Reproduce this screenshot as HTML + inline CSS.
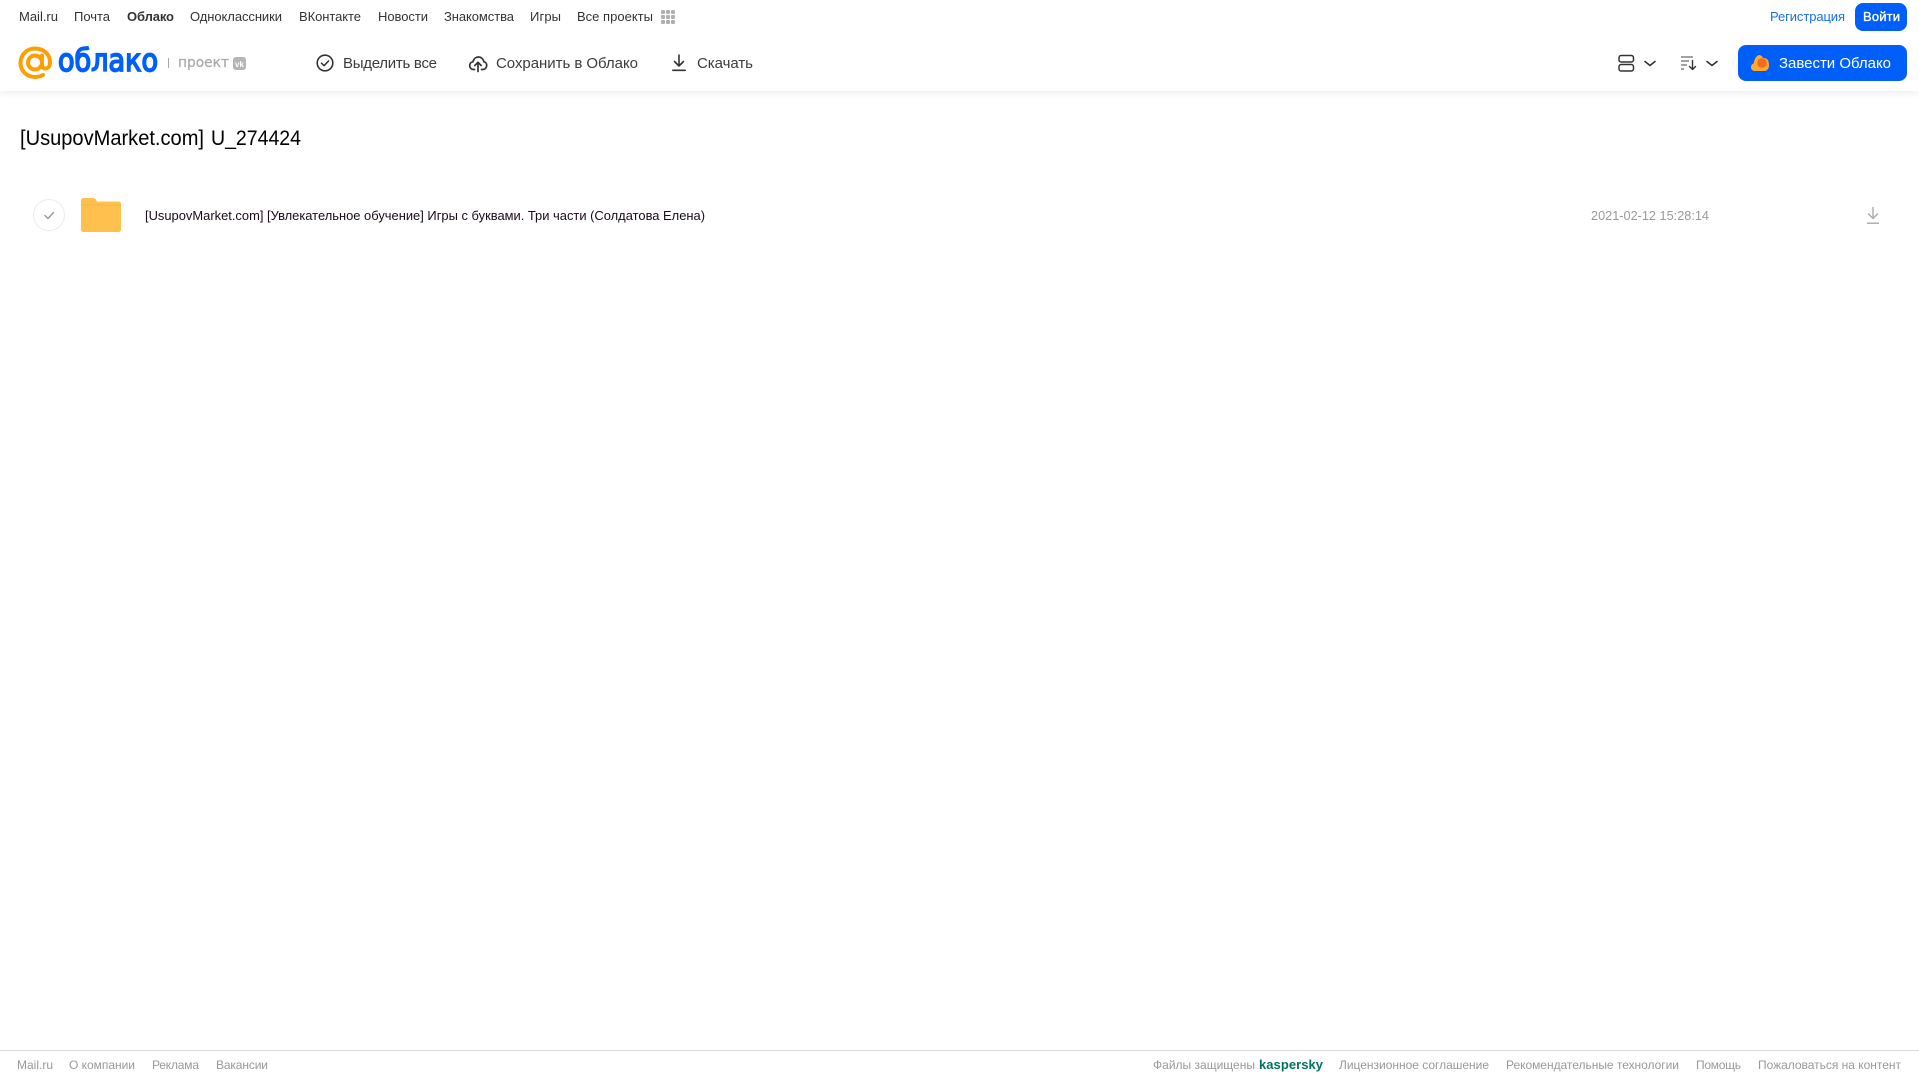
<!DOCTYPE html>
<html lang="ru">
<head>
<meta charset="utf-8">
<title>Облако</title>
<style>
html,body{margin:0;padding:0;background:#fff;width:1919px;height:1079px;overflow:hidden}
svg{display:block;position:absolute;left:0;top:0}
text{font-family:"Liberation Sans",sans-serif}
.n{font-size:13px;fill:#333}
.t{font-size:15px;fill:#3c3c3c}
.f{font-size:12px;fill:#999}
#hdr{position:absolute;left:0;top:0;width:1919px;height:91px;background:#fff;box-shadow:0 1px 8px rgba(0,0,0,.09)}
</style>
</head>
<body>
<div id="hdr"></div>
<svg width="1919" height="1079" viewBox="0 0 1919 1079" xmlns="http://www.w3.org/2000/svg">
  <!-- top nav -->
  <text class="n" x="19" y="21" textLength="39">Mail.ru</text>
  <text class="n" x="74" y="21" textLength="36">Почта</text>
  <text class="n" x="127" y="21" textLength="47" font-weight="700">Облако</text>
  <text class="n" x="190" y="21" textLength="92">Одноклассники</text>
  <text class="n" x="299" y="21" textLength="62">ВКонтакте</text>
  <text class="n" x="378" y="21" textLength="50">Новости</text>
  <text class="n" x="444" y="21" textLength="70">Знакомства</text>
  <text class="n" x="530" y="21" textLength="31">Игры</text>
  <text class="n" x="577" y="21" textLength="76">Все проекты</text>
  <g fill="#b0b0b0">
    <rect x="661" y="10" width="4" height="4" rx="1"/><rect x="666" y="10" width="4" height="4" rx="1"/><rect x="671" y="10" width="4" height="4" rx="1"/>
    <rect x="661" y="15" width="4" height="4" rx="1"/><rect x="666" y="15" width="4" height="4" rx="1"/><rect x="671" y="15" width="4" height="4" rx="1"/>
    <rect x="661" y="20" width="4" height="4" rx="1"/><rect x="666" y="20" width="4" height="4" rx="1"/><rect x="671" y="20" width="4" height="4" rx="1"/>
  </g>
  <text x="1770" y="21" font-size="13" fill="#1a6fe8" textLength="75">Регистрация</text>
  <rect x="1855" y="3" width="52" height="28" rx="8" fill="#005ff9"/>
  <text x="1863" y="21" font-size="13" fill="#fff" stroke="#fff" stroke-width=".35" textLength="37">Войти</text>

  <!-- logo -->
  <g fill="none" stroke="#ff9e00" stroke-width="4">
    <circle cx="35" cy="62.500" r="7"/>
    <path d="M42 55.500v9.500c0 5 8 5 8-2.500 0-8.500-6.500-14-15-14-8.300 0-14.500 6.500-14.500 14.500 0 8.500 7 14 14.500 14 3 0 5.500-.7 8-2" stroke-linecap="round"/>
  </g>
  <text x="58" y="71" font-size="31" fill="#005ff9" stroke="#005ff9" stroke-width="1.700" style="font-family:'DejaVu Sans',sans-serif" textLength="100" lengthAdjust="spacingAndGlyphs">облако</text>
  <rect x="168" y="58" width="1" height="10" fill="#aaa"/>
  <text x="178" y="67" font-size="14" fill="#aaa" stroke="#aaa" stroke-width=".25" style="font-family:'DejaVu Sans',sans-serif" textLength="51" lengthAdjust="spacingAndGlyphs">проект</text>
  <rect x="233" y="57" width="13" height="13" rx="3" fill="#b5b5b5"/>
  <text x="235" y="67" font-size="8" fill="#fff" font-weight="700" textLength="9">vk</text>

  <!-- toolbar -->
  <circle cx="325" cy="63" r="7.800" fill="none" stroke="#333" stroke-width="1.600"/>
  <path d="M321.500 63.200l2.600 2.500 4.500-4.800" fill="none" stroke="#333" stroke-width="1.500" stroke-linecap="round" stroke-linejoin="round"/>
  <text class="t" x="343" y="68" textLength="94">Выделить все</text>

  <path d="M474.500 69.500h-1c-2.300 0-3.800-1.900-3.800-3.900 0-2 1.300-3.500 3.200-3.800.8-3 3-4.800 5.500-4.800 2.800 0 5 2 5.400 4.700 1.700.3 2.900 1.900 2.900 3.700 0 2.200-1.600 4.100-3.800 4.100h-1.400" fill="none" stroke="#333" stroke-width="1.700" stroke-linecap="round"/>
  <path d="M478 71.500v-9M474.800 65.500l3.200-3.200 3.200 3.200" fill="none" stroke="#333" stroke-width="1.700" stroke-linecap="round" stroke-linejoin="round"/>
  <text class="t" x="496" y="68" textLength="142">Сохранить в Облако</text>

  <path d="M679 55v11M674.500 61.500l4.500 4.500 4.500-4.500" fill="none" stroke="#333" stroke-width="1.600" stroke-linecap="round" stroke-linejoin="round"/>
  <rect x="672" y="69.500" width="14" height="1.600" rx=".8" fill="#333"/>
  <text class="t" x="697" y="68" textLength="56">Скачать</text>

  <!-- view / sort -->
  <rect x="1619" y="55.500" width="14.500" height="6.500" rx="2.200" fill="none" stroke="#333" stroke-width="1.500"/>
  <rect x="1619" y="64.500" width="14.500" height="6.500" rx="2.200" fill="none" stroke="#333" stroke-width="1.500"/>
  <path d="M1645 61.500l5 4 5-4" fill="none" stroke="#333" stroke-width="1.600" stroke-linecap="round" stroke-linejoin="round"/>
  <path d="M1681 57h12M1681 61h8M1681 65h6M1681 69h3" fill="none" stroke="#444" stroke-width="1.100"/>
  <path d="M1692.500 60.500v9M1689.500 66.500l3 3 3-3" fill="none" stroke="#333" stroke-width="1.400" stroke-linecap="round" stroke-linejoin="round"/>
  <path d="M1707 61.500l5 4 5-4" fill="none" stroke="#333" stroke-width="1.600" stroke-linecap="round" stroke-linejoin="round"/>

  <!-- CTA -->
  <rect x="1738" y="45" width="169" height="36" rx="8" fill="#005ff9"/>
  <path d="M1755 71c-2.500 0-4-1.800-4-3.800 0-1.900 1.200-3.400 2.800-3.800.2-3.500 2.300-7.400 5-8.400 2 0 3.500 1.300 4.200 3 3-.4 5.800 1.500 5.800 5.200 0 .8.200 1.300.200 2.500 0 3-2 5.300-5 5.300z" fill="#ffa930"/>
  <circle cx="1762" cy="63" r="4.800" fill="#f46a1f"/>
  <text x="1779" y="68" font-size="15" fill="#fff" textLength="112">Завести Облако</text>

  <!-- title -->
  <text x="20" y="145" font-size="21" fill="#000" textLength="184" lengthAdjust="spacingAndGlyphs">[UsupovMarket.com]</text>
  <text x="211" y="145" font-size="21" fill="#000" textLength="90" lengthAdjust="spacingAndGlyphs">U_274424</text>

  <!-- row -->
  <circle cx="49" cy="215" r="15.500" fill="#fff" stroke="#ececec" stroke-width="1"/>
  <path d="M45 215.500l3 3 5.500-6" fill="none" stroke="#999" stroke-width="1.400" stroke-linecap="round" stroke-linejoin="round"/>
  <path d="M81 200.500c0-1.400 1.100-2.500 2.500-2.500h9.500c1.500 0 2.500.8 3.200 2l.6 1.500H118.500c1.400 0 2.500 1.100 2.500 2.500V229.500c0 1.400-1.100 2.500-2.500 2.500H83.500c-1.400 0-2.500-1.100-2.500-2.500z" fill="#ffc14d"/>
  <rect x="81" y="204.500" width="40" height="1" fill="#f5b23e"/>
  <text x="145" y="220" font-size="13" fill="#1a0a1a" textLength="560" lengthAdjust="spacingAndGlyphs">[UsupovMarket.com] [Увлекательное обучение] Игры с буквами. Три части (Солдатова Елена)</text>
  <text x="1591" y="220" font-size="13" fill="#999" textLength="118" lengthAdjust="spacingAndGlyphs">2021-02-12 15:28:14</text>
  <path d="M1873 207.500v11M1868.500 214l4.500 4.500 4.500-4.500" fill="none" stroke="#aaa" stroke-width="1.400" stroke-linecap="round" stroke-linejoin="round"/>
  <rect x="1867" y="222.500" width="12" height="1.400" fill="#aaa"/>

  <!-- footer -->
  <rect x="0" y="1050" width="1919" height="1" fill="#d9d9d9"/>
  <text class="f" x="17" y="1069" textLength="36">Mail.ru</text>
  <text class="f" x="69" y="1069" textLength="66">О компании</text>
  <text class="f" x="152" y="1069" textLength="47">Реклама</text>
  <text class="f" x="216" y="1069" textLength="52">Вакансии</text>
  <text class="f" x="1153" y="1069" textLength="102">Файлы защищены</text>
  <text x="1259" y="1069" font-size="13" font-weight="700" fill="#00745f" textLength="64">kaspersky</text>
  <text class="f" x="1339" y="1069" textLength="150">Лицензионное соглашение</text>
  <text class="f" x="1506" y="1069" textLength="173">Рекомендательные технологии</text>
  <text class="f" x="1696" y="1069" textLength="45">Помощь</text>
  <text class="f" x="1758" y="1069" textLength="143">Пожаловаться на контент</text>
</svg>
</body>
</html>
